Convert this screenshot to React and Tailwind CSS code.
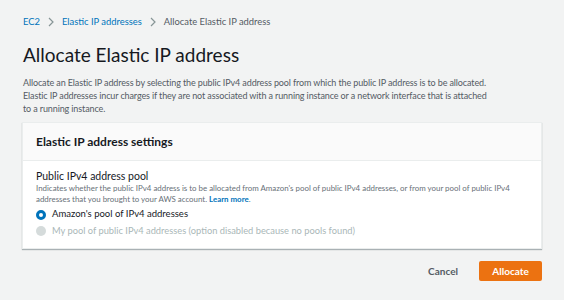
export default function App() {
  return (
    <div className="w-[564px] h-[300px] bg-[#f2f3f3] text-[#16191f] overflow-hidden" style={{ fontFamily: 'Lato, "Noto Sans", sans-serif' }}>
      <div className="pl-[23px] pr-[22px] pt-[15px]">
        {/* breadcrumb */}
        <div className="flex items-center gap-[7px] text-[9.4px] leading-[14px]">
          <span className="text-[#0073bb]">EC2</span>
          <svg width="8" height="10" viewBox="0 0 8 10" fill="none" stroke="#879596" strokeWidth="1.2"><path d="M2 1l4 4-4 4" /></svg>
          <span className="text-[#0073bb]">Elastic IP addresses</span>
          <svg width="8" height="10" viewBox="0 0 8 10" fill="none" stroke="#879596" strokeWidth="1.2"><path d="M2 1l4 4-4 4" /></svg>
          <span className="text-[#545b64]">Allocate Elastic IP address</span>
        </div>

        <h1 className="mt-[14px] text-[19px] leading-[24px] font-normal">Allocate Elastic IP address</h1>

        <p className="mt-[9px] w-[470px] text-[9px] leading-[13px] tracking-[-0.12px] text-[#545b64]">
          Allocate an Elastic IP address by selecting the public IPv4 address pool from which the public IP address is to be allocated.
          Elastic IP addresses incur charges if they are not associated with a running instance or a network interface that is attached to
          a running instance.
        </p>

        {/* card */}
        <div className="mt-[7px] -ml-[1px] w-[520px] bg-white border border-[#eaeded] shadow-[0_1px_1px_rgba(0,28,36,0.3)]">
          <div className="bg-[#fafafa] h-[38px] flex items-center px-[13px] border-b border-[#eaeded]">
            <span className="text-[12px] font-bold">Elastic IP address settings</span>
          </div>
          <div className="px-[13px] pt-[9px] pb-[10px]">
            <div className="text-[10.5px] leading-[13px]">Public IPv4 address pool</div>
            <div className="w-[490px] text-[7.9px] leading-[11px] text-[#687078]">
              Indicates whether the public IPv4 address is to be allocated from Amazon's pool of public IPv4 addresses, or from your pool of public IPv4 addresses that you brought to your AWS account. <span className="font-bold text-[#0073bb]">Learn more</span>.
            </div>
            <div className="mt-[2px] flex items-center gap-[6px] h-[15px]">
              <span className="w-[10px] h-[10px] rounded-full border-[3px] border-[#0073bb] bg-white"></span>
              <span className="text-[9.5px]">Amazon's pool of IPv4 addresses</span>
            </div>
            <div className="mt-[1px] flex items-center gap-[6px] h-[15px]">
              <span className="w-[10px] h-[10px] rounded-full bg-[#d5dbdb]"></span>
              <span className="text-[9.3px] text-[#aab7b8]">My pool of public IPv4 addresses (option disabled because no pools found)</span>
            </div>
          </div>
        </div>

        <div className="mt-[12px] w-[519px] flex justify-end items-center gap-[21px]">
          <span className="text-[10px] font-bold text-[#545b64]">Cancel</span>
          <button className="w-[63px] h-[20px] bg-[#ec7211] rounded-[2px] text-white text-[10px] font-bold">Allocate</button>
        </div>
      </div>
    </div>
  );
}
